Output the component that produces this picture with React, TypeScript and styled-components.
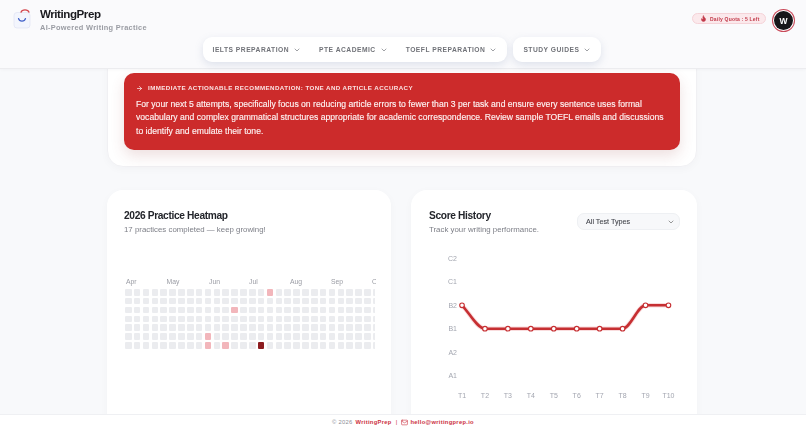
import React from 'react'
import styled, { createGlobalStyle } from 'styled-components'
import { ChevronDown, ArrowRight, Flame, Mail } from 'lucide-react'

const sans = `'Liberation Sans', Arial, sans-serif`

const GlobalStyle = createGlobalStyle`
  html, body { margin: 0; padding: 0; height: 100%; }
  body { font-family: ${sans}; background: #f8f9fb; overflow: hidden; }
  #root { height: 100%; }
`

const Page = styled.div`
  display: flex;
  flex-direction: column;
  width: 806px;
  height: 426px;
  overflow: hidden;
  filter: blur(0.3px);
`

const Header = styled.header`
  flex: 0 0 69px;
  box-sizing: border-box;
  position: relative;
  z-index: 2;
  display: grid;
  grid-template-columns: 1fr auto 1fr;
  background: #fafafc;
  border-bottom: 1px solid #ececef;
  box-shadow: 0 1px 3px rgba(30, 40, 70, 0.03);
`

const Brand = styled.div`
  display: flex;
  align-items: flex-start;
  gap: 8px;
  padding: 7px 0 0 13px;
`

const LogoMark = styled.svg`
  flex: none;
  margin-top: 1px;
`

const BrandText = styled.div`
  display: flex;
  flex-direction: column;
  gap: 2px;
  white-space: nowrap;
`

const BrandName = styled.div`
  font-size: 11.6px;
  line-height: 14px;
  font-weight: 700;
  letter-spacing: -0.45px;
  color: #1a1a1f;
`

const BrandTag = styled.div`
  font-size: 7.4px;
  line-height: 10px;
  font-weight: 700;
  letter-spacing: 0.3px;
  color: #9a9ca3;
`

const Nav = styled.nav`
  display: flex;
  gap: 6px;
  padding-top: 37px;
  margin-left: -2px;
`

const NavGroup = styled.div`
  display: flex;
  align-items: center;
  height: 25px;
  padding: 0 10px;
  gap: 18px;
  background: #fff;
  border-radius: 9px;
  box-shadow: 0 3px 8px rgba(110, 130, 170, 0.2);
`

const NavItem = styled.span`
  display: flex;
  align-items: center;
  gap: 4px;
  font-size: 6.7px;
  font-weight: 700;
  letter-spacing: 0.5px;
  color: #707278;
  white-space: nowrap;
`

const UserArea = styled.div`
  display: flex;
  justify-content: flex-end;
  align-items: flex-start;
  gap: 8px;
  padding: 11px 13px 0 0;
`

const Quota = styled.div`
  display: flex;
  align-items: center;
  gap: 3px;
  box-sizing: border-box;
  width: 74px;
  height: 11px;
  margin-top: 2px;
  padding: 0 0 0 7px;
  border-radius: 7px;
  background: #fbe9ec;
  border: 1px solid #f5d3d8;
  font-size: 5px;
  font-weight: 700;
  letter-spacing: 0.2px;
  color: #c23a4a;
  white-space: nowrap;
`

const Avatar = styled.div`
  display: grid;
  place-items: center;
  box-sizing: border-box;
  width: 19px;
  height: 19px;
  border-radius: 50%;
  background: #17171a;
  box-shadow: 0 0 0 1px #fff, 0 0 0 2px #c94a5a;
  font-size: 8.5px;
  font-weight: 700;
  color: #fff;
`

const Main = styled.main`
  flex: 1;
  min-height: 0;
  overflow: hidden;
  display: flex;
  flex-direction: column;
  gap: 23px;
  padding: 0 109px 0 107px;
`

const Panel = styled.section`
  flex: none;
  box-sizing: border-box;
  margin-top: -41px;
  height: 139px;
  padding: 44px 16px 0;
  background: #fff;
  border: 1px solid #f0f0f3;
  border-radius: 16px;
  box-shadow: 0 2px 8px rgba(30, 40, 70, 0.03);
`

const Callout = styled.div`
  box-sizing: border-box;
  height: 77px;
  padding: 10px 12px 0;
  background: #cc2b2b;
  border-radius: 10px;
  box-shadow: 0 6px 14px rgba(150, 60, 60, 0.16);
  color: #fff;
`

const CalloutTitle = styled.div`
  display: flex;
  align-items: center;
  gap: 5px;
  font-size: 6.2px;
  line-height: 10px;
  font-weight: 700;
  letter-spacing: 0.42px;
  color: #fbe3e3;
  white-space: nowrap;
`

const CalloutBody = styled.p`
  margin: 5px 0 0;
  width: 535px;
  font-size: 8.62px;
  line-height: 13.4px;
  color: #fdf3f3;
  -webkit-text-stroke: 0.14px #fdf3f3;
`

const Columns = styled.div`
  display: grid;
  grid-template-columns: 284px 286px;
  gap: 20px;
`

const Card = styled.section`
  box-sizing: border-box;
  height: 240px;
  padding: 19px 17px 0;
  background: #fff;
  border-radius: 16px;
  box-shadow: 0 2px 8px rgba(30, 40, 70, 0.03);
  overflow: hidden;
`

const CardHeading = styled.div`
  display: flex;
  justify-content: space-between;
  align-items: flex-start;
  padding-left: 1px;
`

const CardTitle = styled.h2`
  margin: 0;
  font-size: 10.2px;
  line-height: 13px;
  font-weight: 700;
  letter-spacing: -0.35px;
  color: #23252b;
`

const CardNote = styled.p`
  margin: 2px 0 0;
  font-size: 7.85px;
  line-height: 11px;
  color: #7d7f87;
`

const Months = styled.div`
  display: flex;
  margin-top: 42px;
  margin-left: 2px;
  width: 250px;
  overflow: hidden;
`

const Month = styled.span<{ $w: number }>`
  flex: 0 0 ${p => p.$w}px;
  font-size: 6.8px;
  line-height: 9px;
  color: #9a9ca4;
`

const Cells = styled.div`
  display: grid;
  grid-template-rows: repeat(7, 6.5px);
  grid-auto-flow: column;
  grid-auto-columns: 6.5px;
  gap: 2.37px;
  margin: 3px 0 0 1px;
  width: 250px;
  overflow: hidden;
`

const levels = ['#ebecef', '#f2b6bb', '#8c1c1f']

const Cell = styled.div<{ $level: number }>`
  border-radius: 1px;
  background: ${p => levels[p.$level]};
`

const TypeSelect = styled.div`
  display: flex;
  align-items: center;
  justify-content: space-between;
  box-sizing: border-box;
  width: 103px;
  height: 17px;
  margin-top: 4px;
  padding: 0 4px 0 8px;
  background: #f7f8fa;
  border: 1px solid #eef0f3;
  border-radius: 7px;
  font-size: 7.2px;
  color: #43454c;
  -webkit-text-stroke: 0.1px #43454c;
`

const ChartWrap = styled.div`
  margin: 13px 0 0 -17px;
`

const months: [string, number][] = [
  ['Apr', 40.5], ['May', 42.5], ['Jun', 40], ['Jul', 41], ['Aug', 41], ['Sep', 41], ['Oct', 41],
]

const active: Record<string, number> = {
  '16-0': 1, '12-2': 1, '9-5': 1, '9-6': 1, '11-6': 1, '15-6': 2,
}

const scoreLabels = ['C2', 'C1', 'B2', 'B1', 'A2', 'A1']

const xAt = (i: number) => 51 + i * 22.94
const yAt = (i: number) => 10.5 + i * 23.4

const scores = [2, 3, 3, 3, 3, 3, 3, 3, 2, 2]

const Logo = () => (
  <LogoMark width="19" height="22" viewBox="0 0 19 22" fill="none">
    <rect x="1" y="4.5" width="16" height="15.5" rx="3" fill="#f3f5fd" stroke="#dfe3f2" strokeWidth="0.7" />
    <path d="M8 4.2 C9 1 15 1 16 4.2" stroke="#d2444c" strokeWidth="1.2" strokeLinecap="round" />
    <path d="M5.5 10.5 C6.5 14 11.5 14 12.5 10.5" stroke="#4261c9" strokeWidth="1.2" strokeLinecap="round" />
  </LogoMark>
)

const ScoreChart = () => {
  const line = scores.reduce((d, s, i) => {
    const x = xAt(i)
    const y = yAt(s)
    if (i === 0) return `M${x} ${y}`
    const px = xAt(i - 1)
    const py = yAt(scores[i - 1])
    const third = (x - px) / 3
    // first point keeps the slope of its segment, the others leave and arrive flat
    const startY = i === 1 ? py + (y - py) / 3 : py
    return `${d} C${px + third} ${startY} ${x - third} ${y} ${x} ${y}`
  }, '')

  return (
    <svg width="285" height="160" viewBox="0 0 285 160">
      {scoreLabels.map((l, i) => (
        <text key={l} x="46" y={yAt(i) + 2.5} textAnchor="end" fontSize="7" fill="#a3a6b0" fontFamily={sans}>{l}</text>
      ))}
      {scores.map((_, i) => (
        <text key={i} x={xAt(i)} y="149.5" textAnchor="middle" fontSize="7" fill="#a3a6b0" fontFamily={sans}>T{i + 1}</text>
      ))}
      <path d={line} fill="none" stroke="#f3b9bb" strokeWidth="4.4" opacity="0.5" />
      <path d={line} fill="none" stroke="#c62f32" strokeWidth="2.6" />
      {scores.map((s, i) => (
        <circle key={i} cx={xAt(i)} cy={yAt(s)} r="2.3" fill="#fff" stroke="#c62f32" strokeWidth="1.1" />
      ))}
    </svg>
  )
}

const Footer = styled.footer`
  flex: 0 0 12px;
  box-sizing: border-box;
  display: flex;
  align-items: center;
  justify-content: center;
  gap: 3px;
  position: relative;
  z-index: 2;
  padding-top: 3px;
  background: #fff;
  border-top: 1px solid #eff0f3;
  font-size: 5.8px;
  letter-spacing: 0.3px;
  color: #8c8e95;
  white-space: nowrap;
`

const FooterLink = styled.span`
  display: inline-flex;
  align-items: center;
  gap: 2px;
  font-weight: 700;
  color: #cc3040;
`

const Divider = styled.span`
  margin: 0 1px;
  color: #cc3040;
`

export default function App() {
  return (
    <Page>
      <GlobalStyle />
      <Header>
        <Brand>
          <Logo />
          <BrandText>
            <BrandName>WritingPrep</BrandName>
            <BrandTag>AI-Powered Writing Practice</BrandTag>
          </BrandText>
        </Brand>
        <Nav>
          <NavGroup>
            <NavItem>IELTS PREPARATION <ChevronDown size={8} /></NavItem>
            <NavItem>PTE ACADEMIC <ChevronDown size={8} /></NavItem>
            <NavItem>TOEFL PREPARATION <ChevronDown size={8} /></NavItem>
          </NavGroup>
          <NavGroup>
            <NavItem>STUDY GUIDES <ChevronDown size={8} /></NavItem>
          </NavGroup>
        </Nav>
        <UserArea>
          <Quota><Flame size={7} fill="#c23a4a" />Daily Quota : 5 Left</Quota>
          <Avatar>W</Avatar>
        </UserArea>
      </Header>
      <Main>
        <Panel>
          <Callout>
            <CalloutTitle>
              <ArrowRight size={7} strokeWidth={2.6} />
              IMMEDIATE ACTIONABLE RECOMMENDATION: TONE AND ARTICLE ACCURACY
            </CalloutTitle>
            <CalloutBody>
              For your next 5 attempts, specifically focus on reducing article errors to fewer than 3 per task and ensure every sentence uses formal vocabulary and complex grammatical structures appropriate for academic correspondence. Review sample TOEFL emails and discussions to identify and emulate their tone.
            </CalloutBody>
          </Callout>
        </Panel>
        <Columns>
          <Card>
            <CardTitle>2026 Practice Heatmap</CardTitle>
            <CardNote>17 practices completed — keep growing!</CardNote>
            <Months>
              {months.map(([m, w]) => <Month key={m} $w={w}>{m}</Month>)}
            </Months>
            <Cells>
              {Array.from({ length: 29 * 7 }, (_, i) => (
                <Cell key={i} $level={active[`${Math.floor(i / 7)}-${i % 7}`] ?? 0} />
              ))}
            </Cells>
          </Card>
          <Card>
            <CardHeading>
              <div>
                <CardTitle>Score History</CardTitle>
                <CardNote>Track your writing performance.</CardNote>
              </div>
              <TypeSelect>All Test Types <ChevronDown size={8} color="#666" /></TypeSelect>
            </CardHeading>
            <ChartWrap><ScoreChart /></ChartWrap>
          </Card>
        </Columns>
      </Main>
      <Footer>
        © 2026 <FooterLink>WritingPrep</FooterLink>
        <Divider>|</Divider>
        <FooterLink><Mail size={7} /> hello@writingprep.io</FooterLink>
      </Footer>
    </Page>
  )
}
